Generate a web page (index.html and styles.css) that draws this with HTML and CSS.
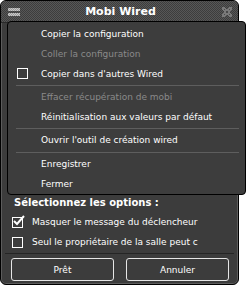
FILE: index.html
```html
<!DOCTYPE html>
<html lang="fr">
<head>
    <meta charset="UTF-8">
    <title>Mobi Wired</title>
    <link rel="stylesheet" href="styles.css">
</head>
<body>
    <div class="window">
        <div class="titlebar">
            <span class="menu-icon"><i></i><i></i></span>
            <span class="title">Mobi Wired</span>
            <svg class="close-icon" width="12" height="12" viewBox="0 0 12 12">
                <path d="M1 1h3v1h1v1h2V2h1V1h3v3h-1v1h-1v2h1v1h1v3H8v-1H7V9H5v1H4v1H1V8h1V7h1V5H2V4H1z" fill="#7a7a7a"/>
                <path d="M3 3h1v1H3zM8 3h1v1H8zM5 5h2v2H5zM3 8h1v1H3zM8 8h1v1H8z" fill="#4a4a4a"/>
            </svg>
        </div>

        <div class="content">
            <div class="hidden-area"></div>
            <div class="section-title">Sélectionnez les options :</div>
            <label class="option">
                <span class="box checked">
                    <svg width="13" height="12" viewBox="0 0 13 12"><path d="M2 6l3 3 7-8" stroke="#fff" stroke-width="2" fill="none"/></svg>
                </span>
                Masquer le message du déclencheur
            </label>
            <label class="option">
                <span class="box"></span>
                Seul le propriétaire de la salle peut c
            </label>
            <div class="footer">
                <button class="btn">Prêt</button>
                <button class="btn">Annuler</button>
            </div>
        </div>

        <!-- context menu opened over the window -->
        <div class="context-menu">
            <div class="item">Copier la configuration</div>
            <div class="item disabled">Coller la configuration</div>
            <div class="item"><span class="box small"></span>Copier dans d'autres Wired</div>
            <div class="sep"></div>
            <div class="item disabled">Effacer récupération de mobi</div>
            <div class="item">Réinitialisation aux valeurs par défaut</div>
            <div class="sep"></div>
            <div class="item">Ouvrir l'outil de création wired</div>
            <div class="sep wide"></div>
            <div class="item">Enregistrer</div>
            <div class="item">Fermer</div>
        </div>
    </div>
</body>
</html>
```

FILE: styles.css
```css
* {
    margin: 0;
    padding: 0;
    box-sizing: border-box;
}

body {
    width: 247px;
    height: 287px;
    background: #fff;
    font-family: 'DejaVu Sans', Verdana, sans-serif;
    font-size: 9px;
    color: #fff;
    overflow: hidden;
}

.window {
    position: relative;
    width: 239px;
    height: 285px;
    background: #3c3c3c;
    border: 1px solid #000;
    border-radius: 6px;
    box-shadow: inset 0 0 0 1px #5c5c5c;
    display: flex;
    flex-direction: column;
}

.titlebar {
    height: 22px;
    flex-shrink: 0;
    display: flex;
    align-items: center;
    justify-content: space-between;
    padding: 0 5px 0 7px;
    border-radius: 5px 5px 0 0;
    background: repeating-conic-gradient(#575757 0 25%, #3d3d3d 0 50%) 0 0 / 2px 2px;
    border-bottom: 1px solid #2a2a2a;
}

.menu-icon {
    display: flex;
    flex-direction: column;
    gap: 2px;
    width: 12px;
}

.menu-icon i {
    display: block;
    height: 3px;
    background: repeating-conic-gradient(#c8c8c8 0 25%, #9a9a9a 0 50%) 0 0 / 2px 2px;
}

.title {
    font-weight: bold;
    font-size: 11px;
}

.content {
    flex: 1;
    display: flex;
    flex-direction: column;
    padding: 0 4px 3px 4px;
}

.hidden-area {
    height: 170px;
}

.section-title {
    font-weight: bold;
    font-size: 10px;
    padding-left: 9px;
    height: 19px;
    line-height: 19px;
}

.option {
    display: flex;
    align-items: center;
    gap: 9px;
    height: 20px;
    padding-left: 7px;
    white-space: nowrap;
    overflow: hidden;
    margin-right: 13px;
}

.box {
    width: 11px;
    height: 11px;
    flex-shrink: 0;
    border: 1px solid #fff;
    position: relative;
}

.box.checked svg {
    position: absolute;
    left: -1px;
    top: -3px;
}

.footer {
    margin-top: auto;
    border-top: 1px solid #252525;
    padding: 4px 5px 0 6px;
    display: flex;
    gap: 12px;
}

.btn {
    flex: 1;
    height: 23px;
    background: #3c3c3c;
    border: 1px solid #e6e6e6;
    border-radius: 3px;
    color: #fff;
    font-family: inherit;
    font-size: 9px;
}

.context-menu {
    position: absolute;
    left: 6px;
    top: 20px;
    width: 239px;
    background: #3d3d3d;
    border: 1px solid #000;
    border-radius: 4px;
    padding-top: 2px;
}

.item {
    height: 20px;
    line-height: 20px;
    padding-left: 33px;
    position: relative;
    white-space: nowrap;
}

.item.disabled {
    color: #8a8a8a;
}

.box.small {
    position: absolute;
    left: 9px;
    top: 4px;
}

.sep {
    height: 1px;
    margin: 1px 6px 1px 8px;
    background: #5e5e5e;
}

.sep.wide {
    margin-top: 2px;
}
```
